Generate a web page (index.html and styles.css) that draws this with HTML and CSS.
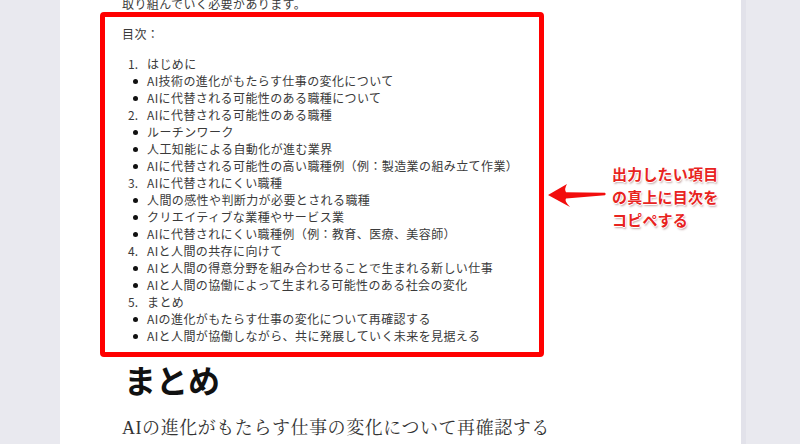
FILE: index.html
```html
<!DOCTYPE html>
<html lang="ja">
<head>
<meta charset="utf-8">
<title>目次</title>
<link rel="stylesheet" href="styles.css">
</head>
<body>
<div class="page">
  <p class="lead">取り組んでいく必要があります。</p>
  <div class="toc-box">
    <p class="toc-title">目次：</p>
    <ul class="toc">
      <li><span class="mk">1.</span><span>はじめに</span></li>
      <li><span class="mk"><i class="dot"></i></span><span>AI技術の進化がもたらす仕事の変化について</span></li>
      <li><span class="mk"><i class="dot"></i></span><span>AIに代替される可能性のある職種について</span></li>
      <li><span class="mk">2.</span><span>AIに代替される可能性のある職種</span></li>
      <li><span class="mk"><i class="dot"></i></span><span>ルーチンワーク</span></li>
      <li><span class="mk"><i class="dot"></i></span><span>人工知能による自動化が進む業界</span></li>
      <li><span class="mk"><i class="dot"></i></span><span>AIに代替される可能性の高い職種例（例：製造業の組み立て作業）</span></li>
      <li><span class="mk">3.</span><span>AIに代替されにくい職種</span></li>
      <li><span class="mk"><i class="dot"></i></span><span>人間の感性や判断力が必要とされる職種</span></li>
      <li><span class="mk"><i class="dot"></i></span><span>クリエイティブな業種やサービス業</span></li>
      <li><span class="mk"><i class="dot"></i></span><span>AIに代替されにくい職種例（例：教育、医療、美容師）</span></li>
      <li><span class="mk">4.</span><span>AIと人間の共存に向けて</span></li>
      <li><span class="mk"><i class="dot"></i></span><span>AIと人間の得意分野を組み合わせることで生まれる新しい仕事</span></li>
      <li><span class="mk"><i class="dot"></i></span><span>AIと人間の協働によって生まれる可能性のある社会の変化</span></li>
      <li><span class="mk">5.</span><span>まとめ</span></li>
      <li><span class="mk"><i class="dot"></i></span><span>AIの進化がもたらす仕事の変化について再確認する</span></li>
      <li><span class="mk"><i class="dot"></i></span><span>AIと人間が協働しながら、共に発展していく未来を見据える</span></li>
    </ul>
  </div>
  <h2 class="heading">まとめ</h2>
  <p class="body-text">AIの進化がもたらす仕事の変化について再確認する</p>

  <svg class="arrow" width="70" height="40" viewBox="540 180 70 40" aria-hidden="true">
    <path d="M548 195 L567 184 Q564 189 566 192.2 L605 192.8 Q606.5 194 605 195.3 L566 198.6 Q564 201 570 207 Z" fill="#f20d0d"/>
  </svg>
  <div class="note">出力したい項目<br>の真上に目次を<br>コピペする</div>
</div>
</body>
</html>
```
FILE: styles.css
```css
html, body {
  margin: 0;
  padding: 0;
}
body {
  background: #e9e9ef;
  width: 800px;
  height: 444px;
  overflow: hidden;
  font-family: "Noto Sans CJK JP", "Noto Sans", sans-serif;
}
.page {
  position: relative;
  margin-left: 60px;
  width: 681px;
  height: 444px;
  background: #ffffff;
  border-right: 5px solid #e2e2ea;
  overflow: hidden;
}
.lead {
  margin: -5px 0 0 62px;
  font-size: 12px;
  line-height: 17px;
  letter-spacing: 0.4px;
  color: #3a3a3a;
}
.toc-box {
  margin-left: 40px;
  width: 444px;
  border: 5px solid #ff0000;
  border-radius: 4px;
  padding: 8px 0 8px 17px;
  box-sizing: border-box;
}
.toc-title {
  margin: 0 0 13px 0;
  font-size: 12px;
  line-height: 17px;
  letter-spacing: 0.4px;
  color: #3a3a3a;
}
.toc {
  list-style: none;
  margin: 0;
  padding: 0;
  font-size: 12px;
  line-height: 17px;
  letter-spacing: 0.4px;
  color: #3a3a3a;
}
.toc li {
  display: flex;
  align-items: center;
  height: 17px;
  white-space: nowrap;
}
.mk {
  width: 16px;
  padding-right: 9px;
  text-align: right;
  flex: none;
  letter-spacing: 0;
  color: #3a3a3a;
}
.dot {
  display: inline-block;
  width: 5px;
  height: 5px;
  border-radius: 50%;
  background: #111;
  vertical-align: middle;
  margin-right: 0.5px;
  position: relative;
  top: -1px;
}
.heading {
  margin: 2px 0 0 64px;
  font-size: 32px;
  line-height: 40px;
  font-weight: 700;
  color: #111;
}
.body-text {
  margin: 14px 0 0 62px;
  font-family: "Liberation Serif", "Noto Serif CJK JP", "Noto Sans CJK JP", serif;
  font-size: 18px;
  line-height: 30px;
  letter-spacing: 0.55px;
  color: #333;
}
.arrow {
  position: absolute;
  left: 480px;
  top: 180px;
}
.note {
  position: absolute;
  left: 552px;
  top: 162px;
  font-size: 15px;
  line-height: 23px;
  font-weight: 700;
  color: #e8231e;
  letter-spacing: 0.2px;
  text-shadow: 1px 0 0 #fff, -1px 0 0 #fff, 0 1px 0 #fff, 0 -1px 0 #fff, 1px 2px 2px rgba(120, 60, 60, 0.45);
}
```
